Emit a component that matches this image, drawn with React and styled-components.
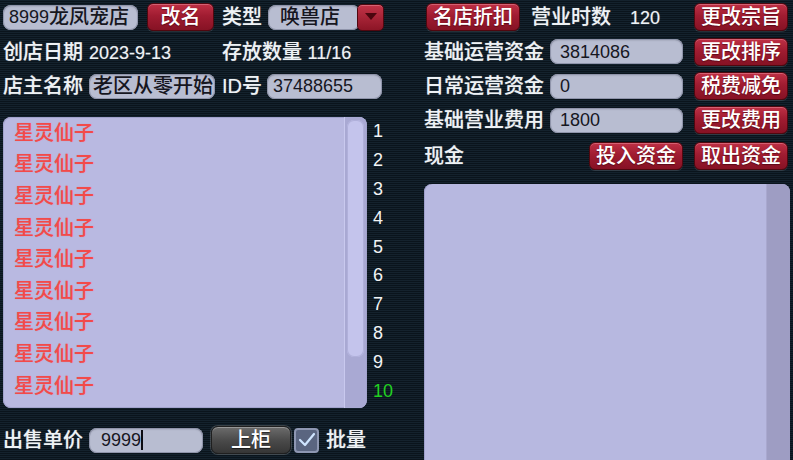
import React from "react";
import styled, { createGlobalStyle } from "styled-components";

const Global = createGlobalStyle`
  html, body { margin: 0; padding: 0; background: #0e1a24; }
  body { font-family: "Liberation Sans", "Noto Sans CJK SC", sans-serif; }
`;

const Screen = styled.div`
  width: 793px;
  height: 460px;
  overflow: hidden;
  background: repeating-linear-gradient(to bottom, #14222d 0 1px, #0a141c 1px 2px);
  display: grid;
  grid-template-columns: 424px 369px;
  font-size: 20px;
  font-weight: 500;
  line-height: 1;
  color: #eef2f5;
`;

const Column = styled.div`
  display: flex;
  flex-direction: column;
  padding-left: ${(p) => p.$pl || 0}px;
  padding-right: ${(p) => p.$pr || 0}px;
`;

const Row = styled.div`
  height: ${(p) => p.$h || 34}px;
  display: flex;
  align-items: center;
  flex-shrink: 0;
`;

const Label = styled.span`
  display: inline-block;
  width: ${(p) => (p.$w ? `${p.$w}px` : "auto")};
  margin-left: ${(p) => p.$ml || 0}px;
  white-space: nowrap;
  color: #eef2f5;
  text-shadow: 0 0 1px rgba(255, 255, 255, 0.45);
`;

const Num = styled.span`
  font-size: 18px;
`;

const Field = styled.div`
  box-sizing: border-box;
  width: ${(p) => p.$w}px;
  height: 25px;
  margin-left: ${(p) => p.$ml || 0}px;
  padding: 0 ${(p) => (p.$pad != null ? p.$pad : 10)}px;
  display: flex;
  align-items: center;
  background: #b8bdd1;
  border-radius: 8px;
  box-shadow: inset 0 0 0 1px #8f94aa, inset 0 1px 2px rgba(0, 0, 0, 0.25);
  color: #16161f;
  white-space: nowrap;
  overflow: hidden;
`;

const Caret = styled.span`
  display: inline-block;
  width: 2px;
  height: 20px;
  background: #0c0c12;
`;

const RedButton = styled.div`
  box-sizing: border-box;
  width: ${(p) => p.$w || 94}px;
  height: 28px;
  margin-left: ${(p) => (p.$ml === "auto" ? "auto" : `${p.$ml || 0}px`)};
  display: flex;
  align-items: center;
  justify-content: center;
  border-radius: 6px;
  background: linear-gradient(to bottom, #bf3045 0%, #a01c31 45%, #861224 100%);
  border: 1px solid #50070f;
  box-shadow: inset 0 1px 0 rgba(255, 190, 200, 0.35), 0 1px 0 rgba(255, 255, 255, 0.12);
  color: #ffffff;
  text-shadow: 0 1px 1px rgba(60, 0, 10, 0.6);
  white-space: nowrap;
`;

const DarkButton = styled(RedButton)`
  border-radius: 7px;
  background: linear-gradient(to bottom, #6c6c6c 0%, #4b4b4b 50%, #363636 100%);
  border: 1px solid #1f1f1f;
  box-shadow: inset 0 1px 0 rgba(255, 255, 255, 0.3), 0 0 0 1px rgba(150, 150, 150, 0.35);
  text-shadow: 0 1px 1px rgba(0, 0, 0, 0.6);
`;

const Select = styled.div`
  display: flex;
  align-items: center;
  margin-left: 6px;
`;

const DropButton = styled.div`
  box-sizing: border-box;
  width: 27px;
  height: 27px;
  margin-left: -3px;
  border-radius: 5px;
  background: linear-gradient(to bottom, #c23347, #8c1526);
  border: 1px solid #50070f;
  box-shadow: inset 0 1px 0 rgba(255, 190, 200, 0.35);
  display: flex;
  align-items: center;
  justify-content: center;
`;

const ListArea = styled.div`
  display: flex;
  margin-top: 14px;
  height: 291px;
  flex-shrink: 0;
`;

const ListBox = styled.div`
  box-sizing: border-box;
  width: 364px;
  height: 291px;
  display: flex;
  background: #b9b9e1;
  border-radius: 8px;
  overflow: hidden;
  box-shadow: inset 0 0 0 1px #a2a2cc;
`;

const Items = styled.div`
  flex: 1;
  padding-left: 11px;
  display: flex;
  flex-direction: column;
`;

const Item = styled.div`
  height: 31.6px;
  display: flex;
  align-items: center;
  color: #f24a4a;
  text-shadow: 0 0 1px rgba(242, 74, 74, 0.4);
`;

const Track = styled.div`
  box-sizing: border-box;
  width: 22px;
  height: 100%;
  padding: 3px 2px 0 2px;
  margin-right: 1px;
  background: #a9a9d3;
  border-left: 1px solid #c9c9ee;
`;

const Thumb = styled.div`
  height: 237px;
  border-radius: 7px;
  background: #c4c4ec;
  box-shadow: inset 0 0 0 1px #b0b0da;
`;

const Numbers = styled.div`
  margin-left: 6px;
  display: flex;
  flex-direction: column;
`;

const Index = styled.div`
  height: 28.8px;
  display: flex;
  align-items: center;
  font-size: 18px;
  color: ${(p) => (p.$active ? "#22d022" : "#f2f4f6")};
`;

const BottomRow = styled(Row)`
  margin-top: 18px;
  height: 28px;
`;

const Check = styled.div`
  box-sizing: border-box;
  width: 25px;
  height: 25px;
  margin-left: 3px;
  border-radius: 4px;
  background: #5a6580;
  border: 2px solid #8e97b2;
  display: flex;
  align-items: center;
  justify-content: center;
`;

const Panel = styled.div`
  margin-top: 9px;
  width: 366px;
  height: 300px;
  display: flex;
  border-radius: 8px 8px 0 0;
  overflow: hidden;
  background: #b7b8e0;
  box-shadow: inset 1px 0 0 #9e9fcb;
  flex-shrink: 0;
`;

const PanelBody = styled.div`
  flex: 1;
`;

const PanelStrip = styled.div`
  width: 23px;
  background: #9e9dc3;
  border-left: 1px solid #a9a8cf;
`;

const Spacer = styled.div`
  flex: 1;
`;

const pets = Array.from({ length: 9 }, () => "星灵仙子");
const slots = Array.from({ length: 10 }, (_, i) => i + 1);

export default function App() {
  return (
    <>
      <Global />
      <Screen>
        <Column $pl={3}>
          <Row $h={34}>
            <Field $w={135} $pad={6}>
              <Num>8999</Num>龙凤宠店
            </Field>
            <RedButton $w={67} $ml={9}>改名</RedButton>
            <Label $ml={8}>类型</Label>
            <Select>
              <Field $w={92} $pad={12}>唤兽店</Field>
              <DropButton>
                <svg width="14" height="10" viewBox="0 0 14 10">
                  <polygon points="1,1 13,1 7,8" fill="#4a060e" />
                </svg>
              </DropButton>
            </Select>
          </Row>
          <Row $h={35}>
            <Label $w={86}>创店日期</Label>
            <Label $w={133}>
              <Num>2023-9-13</Num>
            </Label>
            <Label>存放数量 <Num>11/16</Num></Label>
          </Row>
          <Row $h={34}>
            <Label $w={86}>店主名称</Label>
            <Field $w={126} $pad={4}>老区从零开始</Field>
            <Label $w={45} $ml={7}>ID号</Label>
            <Field $w={115} $pad={6}>
              <Num>37488655</Num>
            </Field>
          </Row>
          <ListArea>
            <ListBox>
              <Items>
                {pets.map((name, i) => (
                  <Item key={i}>{name}</Item>
                ))}
              </Items>
              <Track>
                <Thumb />
              </Track>
            </ListBox>
            <Numbers>
              {slots.map((n) => (
                <Index key={n} $active={n === 10}>{n}</Index>
              ))}
            </Numbers>
          </ListArea>
          <BottomRow>
            <Label $w={86}>出售单价</Label>
            <Field $w={114} $pad={12}>
              <Num>9999</Num>
              <Caret />
            </Field>
            <DarkButton $w={80} $ml={8}>上柜</DarkButton>
            <Check>
              <svg width="18" height="16" viewBox="0 0 18 16">
                <polyline points="2,8 7,13 16,2" fill="none" stroke="#cfe5ff" strokeWidth="2.2" strokeLinecap="round" strokeLinejoin="round" />
              </svg>
            </Check>
            <Label $ml={7}>批量</Label>
          </BottomRow>
        </Column>

        <Column $pr={5}>
          <Row $h={34}>
            <RedButton $ml={2}>名店折扣</RedButton>
            <Label $w={99} $ml={11}>营业时数</Label>
            <Label>
              <Num>120</Num>
            </Label>
            <RedButton $ml="auto">更改宗旨</RedButton>
          </Row>
          <Row $h={35}>
            <Label $w={126}>基础运营资金</Label>
            <Field $w={133}>
              <Num>3814086</Num>
            </Field>
            <RedButton $ml="auto">更改排序</RedButton>
          </Row>
          <Row $h={34}>
            <Label $w={126}>日常运营资金</Label>
            <Field $w={133}>
              <Num>0</Num>
            </Field>
            <RedButton $ml="auto">税费减免</RedButton>
          </Row>
          <Row $h={34}>
            <Label $w={126}>基础营业费用</Label>
            <Field $w={133}>
              <Num>1800</Num>
            </Field>
            <RedButton $ml="auto">更改费用</RedButton>
          </Row>
          <Row $h={38}>
            <Label>现金</Label>
            <Spacer />
            <RedButton>投入资金</RedButton>
            <RedButton $ml={11}>取出资金</RedButton>
          </Row>
          <Panel>
            <PanelBody />
            <PanelStrip />
          </Panel>
        </Column>
      </Screen>
    </>
  );
}
